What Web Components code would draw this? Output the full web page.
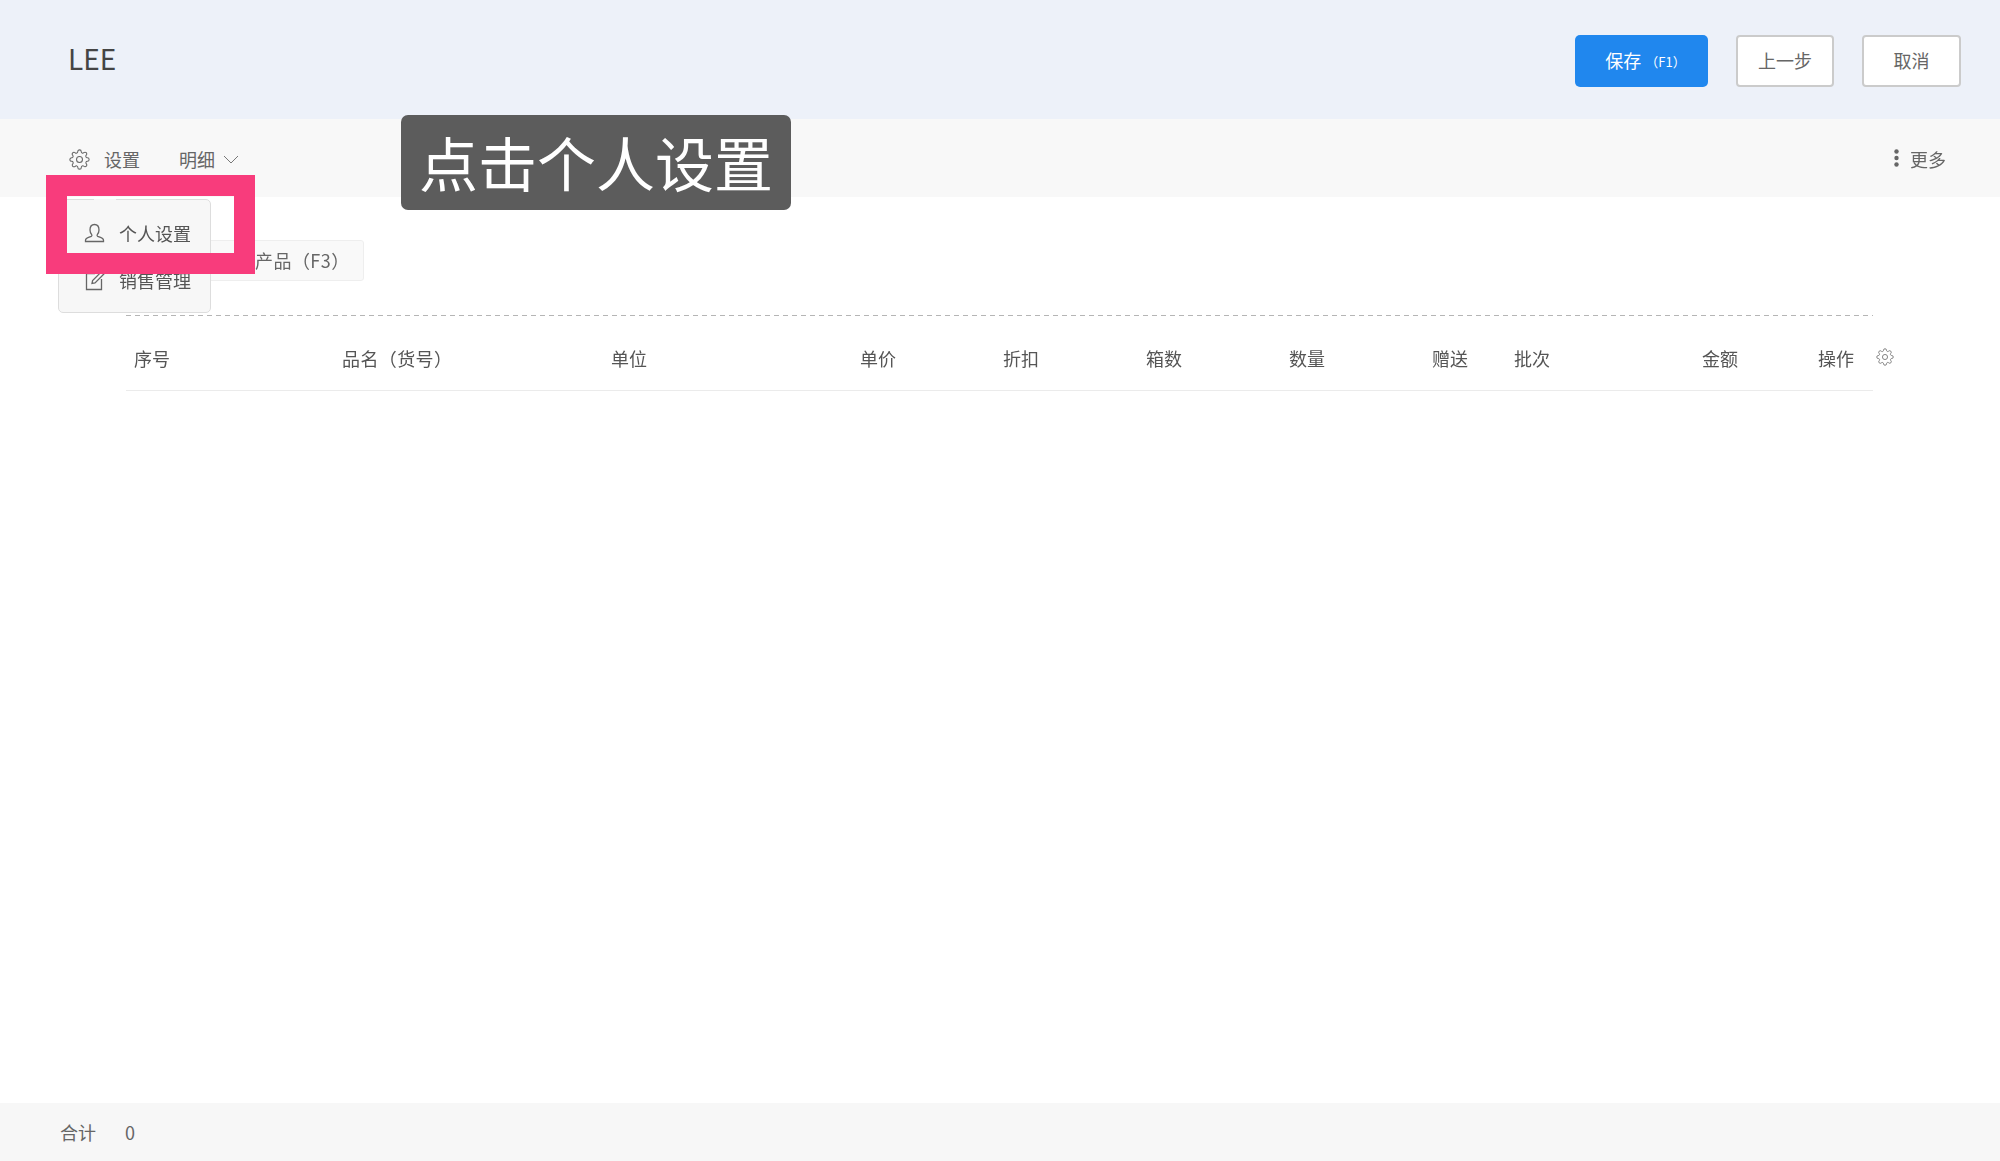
<!DOCTYPE html>
<html lang="zh">
<head>
<meta charset="utf-8">
<title>LEE</title>
<style>
  html, body { margin: 0; height: 100%; }
  body { font-family: "Noto Sans CJK SC", "Noto Sans", sans-serif; color: #555; }
</style>
</head>
<body>
<order-page></order-page>

<script>
const GEAR = `<circle cx="12" cy="12" r="3.400"/><path d="M19.4 15a1.65 1.65 0 0 0 .33 1.82l.06.06a2 2 0 0 1 0 2.83 2 2 0 0 1-2.83 0l-.06-.06a1.65 1.65 0 0 0-1.82-.33 1.65 1.65 0 0 0-1 1.51V21a2 2 0 0 1-2 2 2 2 0 0 1-2-2v-.09A1.65 1.65 0 0 0 9 19.4a1.65 1.65 0 0 0-1.82.33l-.06.06a2 2 0 0 1-2.83 0 2 2 0 0 1 0-2.83l.06-.06a1.65 1.65 0 0 0 .33-1.82 1.65 1.65 0 0 0-1.51-1H3a2 2 0 0 1-2-2 2 2 0 0 1 2-2h.09A1.65 1.65 0 0 0 4.6 9a1.65 1.65 0 0 0-.33-1.82l-.06-.06a2 2 0 0 1 0-2.83 2 2 0 0 1 2.83 0l.06.06a1.65 1.65 0 0 0 1.82.33H9a1.65 1.65 0 0 0 1-1.51V3a2 2 0 0 1 2-2 2 2 0 0 1 2 2v.09a1.65 1.65 0 0 0 1 1.51 1.65 1.65 0 0 0 1.82-.33l.06-.06a2 2 0 0 1 2.83 0 2 2 0 0 1 0 2.83l-.06.06a1.65 1.65 0 0 0-.33 1.82V9a1.65 1.65 0 0 0 1.51 1H21a2 2 0 0 1 2 2 2 2 0 0 1-2 2h-.09a1.65 1.65 0 0 0-1.51 1z"/>`;

// Cabecera azul con el nombre y los botones
class TopBar extends HTMLElement {
  constructor() {
    super();
    this.attachShadow({mode: 'open'}).innerHTML = `
      <style>
        :host { display: flex; align-items: center; justify-content: space-between; height: 119px; box-sizing: border-box; padding: 0 39px 0 68px; background: #edf1f9; }
        .name { font-size: 28px; line-height: 1; color: #444; margin-top: -4px; }
        .actions { display: flex; gap: 28px; margin-top: 2px; }
        .btn { height: 52px; box-sizing: border-box; padding-bottom: 2px; display: flex; align-items: center; justify-content: center; font-size: 18px; border-radius: 4px; border: 2px solid #cbcbcb; background: #fff; color: #666; }
        .save { width: 133px; padding-left: 8px; background: #2087ee; border: 0; color: #fff; border-radius: 5px; }
        .save small { font-size: 13px; margin: 3px 0 0 4px; }
        .prev { width: 98px; }
        .cancel { width: 99px; }
      </style>
      <div class="name">LEE</div>
      <div class="actions">
        <div class="btn save">保存<small>（F1）</small></div>
        <div class="btn prev">上一步</div>
        <div class="btn cancel">取消</div>
      </div>`;
  }
}

class ToolBar extends HTMLElement {
  constructor() {
    super();
    this.attachShadow({mode: 'open'}).innerHTML = `
      <style>
        :host { display: flex; align-items: center; height: 78px; box-sizing: border-box; padding: 2px 54px 0 69px; background: #f8f8f8; font-size: 18px; color: #666; }
        svg { display: block; fill: none; stroke: #666; }
        .gear { width: 21px; height: 21px; stroke-width: 1.2; margin-right: 14px; }
        .detail { margin-left: 39px; }
        .chevron { width: 16px; height: 9px; margin-left: 8px; stroke: #777; stroke-width: 1; }
        .more { margin-left: auto; display: flex; align-items: center; gap: 11px; }
        .dots { width: 5px; height: 18px; fill: #666; stroke: none; margin-top: -2px; }
      </style>
      <svg class="gear" viewBox="0 0 24 24">${GEAR}</svg>
      <span>设置</span>
      <span class="detail">明细</span>
      <svg class="chevron" viewBox="0 0 16 9"><path d="M1 1l7 7 7-7"/></svg>
      <div class="more">
        <svg class="dots" viewBox="0 0 5 18"><circle cx="2.5" cy="2.5" r="2.2"/><circle cx="2.5" cy="9" r="2.2"/><circle cx="2.5" cy="15.5" r="2.2"/></svg>
        <span>更多</span>
      </div>`;
  }
}

// Botones de la fila de producto
class TabRow extends HTMLElement {
  constructor() {
    super();
    this.attachShadow({mode: 'open'}).innerHTML = `
      <style>
        :host { display: block; padding: 43px 0 34px 200px; }
        .tab { width: 164px; height: 41px; box-sizing: border-box; padding: 0 0 1px 54px; display: flex; align-items: center; border: 1px solid #eee; border-radius: 3px; background: #f9f9f9; font-size: 18px; letter-spacing: .45px; color: #666; white-space: nowrap; }
      </style>
      <div class="tab">产品（F3）</div>`;
  }
}

class DataTable extends HTMLElement {
  constructor() {
    super();
    const cols = ['序号', '品名（货号）', '单位', '单价', '折扣', '箱数', '数量', '赠送', '批次', '金额', '操作'];
    this.attachShadow({mode: 'open'}).innerHTML = `
      <style>
        :host { display: flex; align-items: flex-start; margin-left: 126px; }
        .wrap { width: 1747px; }
        .dash { height: 1px; background: repeating-linear-gradient(90deg, #b5b5b5 0 5px, transparent 5px 9px); }
        .head { display: grid; grid-template-columns: 208px 269px 249px 143px 143px 143px 143px 82px 188px 116px 63px; height: 75px; box-sizing: border-box; padding-top: 9px; align-items: center; border-bottom: 1px solid #ebebeb; font-size: 18px; color: #555; }
        .head span { padding-left: 8px; white-space: nowrap; }
        .head .wide { letter-spacing: .4px; }
        svg { width: 18px; height: 18px; margin: 33px 0 0 3px; fill: none; stroke: #777; stroke-width: 1.2; flex: none; }
      </style>
      <div class="wrap">
        <div class="dash"></div>
        <div class="head">${cols.map((c, i) => `<span${i == 1 ? ' class="wide"' : ''}>${c}</span>`).join('')}</div>
      </div>
      <svg viewBox="0 0 24 24">${GEAR}</svg>`;
  }
}

class SumBar extends HTMLElement {
  constructor() {
    super();
    this.attachShadow({mode: 'open'}).innerHTML = `
      <style>
        :host { display: flex; align-items: center; gap: 29px; height: 58px; box-sizing: border-box; padding-left: 60px; background: #f7f7f7; font-size: 18px; color: #666; }
      </style>
      <span>合计</span><span>0</span>`;
  }
}

// Menú desplegable de ajustes
class SettingsMenu extends HTMLElement {
  constructor() {
    super();
    this.attachShadow({mode: 'open'}).innerHTML = `
      <style>
        :host { position: absolute; left: 58px; top: 199px; width: 153px; height: 114px; box-sizing: border-box; border: 1px solid #ddd; border-radius: 5px; background: #f7f7f7; font-size: 18px; color: #555; }
        :host::before { content: ""; position: absolute; left: 35px; top: -1px; width: 22px; height: 1px; background: #f7f7f7; }
        .item { position: absolute; left: 25px; display: flex; align-items: center; gap: 14px; white-space: nowrap; }
        .user { top: 20px; }
        .edit { top: 67px; }
        svg { width: 21px; height: 21px; fill: none; stroke: #666; stroke-width: 1.3; flex: none; }
      </style>
      <div class="item user">
        <svg viewBox="0 0 21 21"><path d="M1.5 18.5v-1.2c0-1.600 1.200-2.400 3-3l2.800-1c.6-.3.8-.9.4-1.600C6.600 10.400 6 9 6 7c0-3.200 1.800-5.500 4.500-5.500S15 3.800 15 7c0 2-.6 3.400-1.700 4.700-.4.700-.2 1.300.4 1.600l2.800 1c1.800.6 3 1.400 3 3v1.200z"/></svg>
        <span>个人设置</span>
      </div>
      <div class="item edit">
        <svg viewBox="0 0 21 21"><path d="M11 3.500H2.500v16h15V9"/><path d="M8 13.500l.6-3L17.300 1.800l2.400 2.400L11 12.900z"/></svg>
        <span>销售管理</span>
      </div>`;
  }
}

class HintLabel extends HTMLElement {
  constructor() {
    super();
    this.attachShadow({mode: 'open'}).innerHTML = `
      <style>
        :host { position: absolute; left: 401px; top: 115px; width: 390px; height: 95px; padding-bottom: 2px; box-sizing: border-box; display: flex; align-items: center; justify-content: center; border-radius: 7px; background: #5c5c5c; color: #fff; font-size: 59px; font-weight: 400; line-height: 1; white-space: nowrap; }
      </style>
      <slot></slot>`;
  }
}

class MarkBox extends HTMLElement {
  constructor() {
    super();
    this.attachShadow({mode: 'open'}).innerHTML = `
      <style>
        :host { position: absolute; left: 46px; top: 175px; width: 209px; height: 99px; box-sizing: border-box; border: 21px solid #f83c7c; }
      </style>`;
  }
}

class OrderPage extends HTMLElement {
  constructor() {
    super();
    this.attachShadow({mode: 'open'}).innerHTML = `
      <style>
        :host { display: block; position: relative; height: 1161px; overflow: hidden; background: #fff; }
        /* La captura original esta reescalada: todo lo de debajo va un poco suave */
        .shot { display: flex; flex-direction: column; position: relative; height: 100%; filter: blur(.4px); }
        main { flex: 1; }
      </style>
      <div class="shot">
        <top-bar></top-bar>
        <tool-bar></tool-bar>
        <main>
          <tab-row></tab-row>
          <data-table></data-table>
        </main>
        <sum-bar></sum-bar>
        <settings-menu></settings-menu>
      </div>
      <hint-label>点击个人设置</hint-label>
      <mark-box></mark-box>`;
  }
}

customElements.define('top-bar', TopBar);
customElements.define('tool-bar', ToolBar);
customElements.define('tab-row', TabRow);
customElements.define('data-table', DataTable);
customElements.define('sum-bar', SumBar);
customElements.define('settings-menu', SettingsMenu);
customElements.define('hint-label', HintLabel);
customElements.define('mark-box', MarkBox);
customElements.define('order-page', OrderPage);
</script>
</body>
</html>
